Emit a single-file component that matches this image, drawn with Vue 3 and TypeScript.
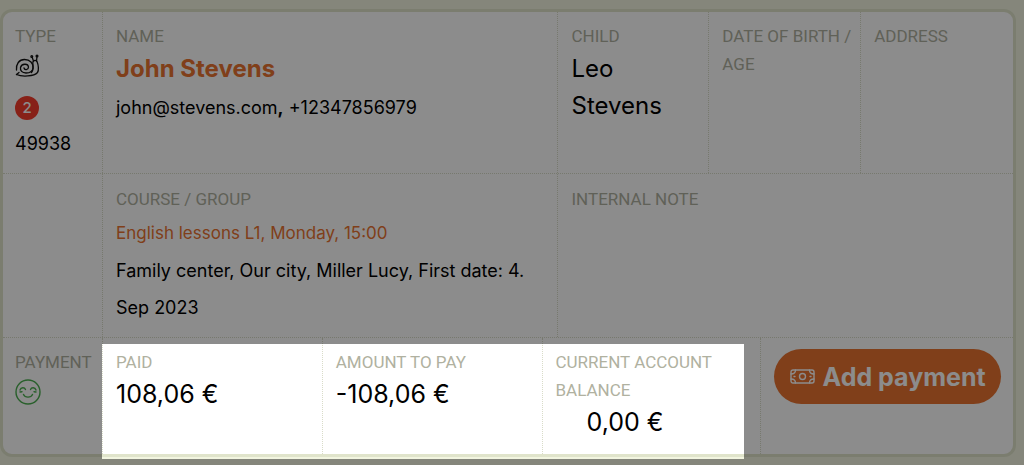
<script setup lang="ts">
interface Payment {
  label: string
  amount: string
  indented?: boolean
}

const payments: Payment[] = [
  { label: 'PAID', amount: '108,06 €' },
  { label: 'AMOUNT TO PAY', amount: '-108,06 €' },
  { label: 'CURRENT ACCOUNT BALANCE', amount: '0,00 €', indented: true },
]
</script>

<template>
  <main class="page">
    <section class="card">
      <div class="row person">
        <div class="cell">
          <div class="label">TYPE</div>
          <svg class="snail" viewBox="0 0 25 24" aria-label="Snail">
            <path d="M1.500 20.500C7 23 19 22.500 22.500 18.500C24 16.500 23.500 11 22 7.500C20.500 5.500 17.500 6.500 17.800 9C18.500 13 18.500 16 16.500 18.500" />
            <path d="M1.500 20.500L4 18.500M1.500 16C1 10 4 5.500 9.500 5.500C15 5.500 18.500 9.500 18 14C17.500 17.500 14.500 19 11 19C7 19 5 16.500 5.500 13.500C6.500 9.500 13 9 13.500 13C13.500 16 9.500 16.500 9 14" />
            <path d="M18.500 7L17 3M21.500 7L22 2.500" />
            <circle cx="16.800" cy="2.500" r="0.900" />
            <circle cx="22" cy="2" r="0.900" />
          </svg>
          <div class="badge">2</div>
          <div class="text">49938</div>
        </div>
        <div class="cell">
          <div class="label">NAME</div>
          <a class="value name" href="#">John Stevens</a>
          <div class="text contact">john@stevens.com<b>,</b> +12347856979</div>
        </div>
        <div class="cell">
          <div class="label">CHILD</div>
          <div class="value">Leo<br />Stevens</div>
        </div>
        <div class="cell"><div class="label">DATE OF BIRTH / AGE</div></div>
        <div class="cell"><div class="label">ADDRESS</div></div>
      </div>

      <div class="row course">
        <div class="cell"></div>
        <div class="cell">
          <div class="label">COURSE / GROUP</div>
          <a class="text link" href="#">English lessons L1, Monday, 15:00</a>
          <div class="text">Family center, Our city, Miller Lucy, First date: 4. Sep 2023</div>
        </div>
        <div class="cell"><div class="label">INTERNAL NOTE</div></div>
      </div>

      <div class="row payment">
        <div class="cell">
          <div class="label">PAYMENT</div>
          <svg class="smile" viewBox="0 0 26 26" aria-label="Satisfied">
            <circle cx="13" cy="13" r="12" />
            <path d="M8.500 15.500C10 19 16 19 17.500 15.500M5 11C6 8 9.500 8 10.500 10.500M15.500 10.500C16.500 8 20 8 21 11M5 13L7 12.700M19 12.700L21 13" />
          </svg>
        </div>
        <div v-for="item in payments" :key="item.label" class="cell">
          <div class="label">{{ item.label }}</div>
          <div class="value amount" :class="{ indented: item.indented }">{{ item.amount }}</div>
        </div>
        <div class="cell action">
          <button class="add" type="button">
            <svg class="note" viewBox="0 0 25 15" aria-hidden="true">
              <rect x="1" y="1" width="23" height="13" rx="2" />
              <circle cx="12.500" cy="7.500" r="3" />
              <path d="M1 5C4 5 5.500 3.500 5.500 1M1 10C4 10 5.500 11.500 5.500 14M24 5C21 5 19.500 3.500 19.500 1M24 10C21 10 19.500 11.500 19.500 14M4 7.500H5M20 7.500H21" />
            </svg>
            Add payment
          </button>
        </div>
        <div class="spotlight"></div>
      </div>
    </section>
  </main>
</template>

<style>
body {
  margin: 0;
  background: #85877b;
}
</style>

<style scoped>
.page {
  box-sizing: border-box;
  min-height: 100vh;
  padding: 9px 8px 8px 0;
  overflow: hidden;
  background: #f2f5e0;
  color: #000;
  font-family: Inter, "Liberation Sans", sans-serif;
}

.card {
  background: #fff;
  border: 3px solid #e0e4cb;
  border-radius: 12px;
}

.row {
  display: grid;
  min-height: 163px;
}

.row + .row {
  border-top: 1px dotted #d9dcc8;
}

.person {
  min-height: 161px;
  grid-template-columns: 100px 456fr 151fr 152fr 152fr;
}

.course {
  grid-template-columns: 100px 456fr 455fr;
}

.payment {
  position: relative;
  min-height: 116px;
  grid-template-columns: 100px 220fr 220fr 219fr 252fr;
}

.cell {
  min-width: 0;
  box-sizing: border-box;
  padding: 10px 8px 10px 12px;
  border-right: 1px dotted #d9dcc8;
}

.course .cell {
  padding-top: 11px;
}

.cell + .cell {
  padding-left: 13px;
}

.action {
  padding-right: 12px;
}

.cell:nth-child(5),
.course .cell:last-child {
  border-right: 0;
}

.label {
  color: #b0b1a0;
  font-family: Roboto, "Liberation Sans", sans-serif;
  font-size: 17px;
  line-height: 28px;
}

.value {
  display: block;
  font-size: 24px;
  line-height: 37px;
}

.amount {
  font-size: 25px;
}

.text {
  display: block;
  font-size: 18px;
  line-height: 37px;
}

.contact {
  margin-top: 2px;
}

.name {
  color: #e97331;
  font-weight: 700;
  text-decoration: none;
}

.link {
  margin-top: 2px;
  color: #e97331;
  font-size: 17px;
  text-decoration: none;
}

.indented {
  padding-left: 31px;
}

.snail,
.smile,
.note {
  display: block;
  fill: none;
  stroke-linecap: round;
  stroke-linejoin: round;
}

.snail {
  width: 25px;
  height: 24px;
  margin-top: 4px;
  stroke: #111;
  stroke-width: 1.3;
}

.badge {
  width: 24px;
  margin: 18px 0 5px;
  border-radius: 50%;
  background: #f63c2d;
  color: #fff;
  font-size: 15px;
  font-weight: 500;
  line-height: 24px;
  text-align: center;
}

.smile {
  width: 26px;
  height: 26px;
  margin-top: 3px;
  stroke: #4caf50;
  stroke-width: 1.4;
}

.add {
  display: flex;
  align-items: center;
  justify-content: center;
  gap: 8px;
  width: 100%;
  height: 55px;
  margin-top: 1px;
  padding: 0;
  border: 0;
  border-radius: 28px;
  background: #e97331;
  color: #fff;
  font: 700 25px Inter, "Liberation Sans", sans-serif;
  white-space: nowrap;
}

.note {
  width: 25px;
  height: 15px;
  stroke: #fff;
  stroke-width: 1.4;
}

.spotlight {
  position: absolute;
  top: 6px;
  right: 26.6%;
  bottom: -5px;
  left: 99px;
  box-shadow: 0 0 0 200vmax rgba(0, 0, 0, 0.45);
  pointer-events: none;
}
</style>
